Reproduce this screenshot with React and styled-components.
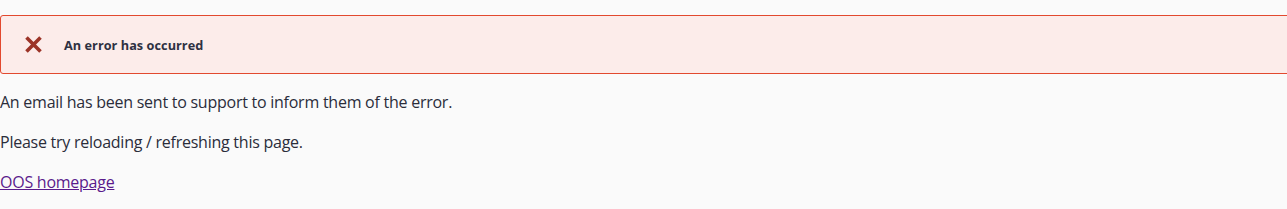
import React from 'react';
import styled, { createGlobalStyle } from 'styled-components';

const GlobalStyle = createGlobalStyle`
    html, body {
        margin: 0;
        padding: 0;
        background: #fafafa;
        overflow: hidden;
    }
`;

const StyledPage = styled.div`
    padding-top: 15px;
    font-family: "Open Sans", "Noto Sans", sans-serif;
    color: #2b2d3a;
`;

const StyledAlert = styled.div`
    display: flex;
    align-items: center;
    gap: 21px;
    box-sizing: border-box;
    width: calc(100% + 3px);
    height: 59px;
    padding: 0 0 0 23px;
    background: #fcecea;
    border: 1px solid #e2492f;
    border-radius: 3px;
`;

const StyledAlertTitle = styled.span`
    font-size: 12.7px;
    font-weight: 700;
    color: #2e3142;
    letter-spacing: 0.05px;
`;

const StyledBody = styled.div`
    padding-top: 16px;
`;

const StyledText = styled.p`
    margin: 0 0 16px 0;
    font-size: 16px;
    line-height: 24px;
    letter-spacing: -0.25px;
`;

const StyledLink = styled.a`
    font-size: 16px;
    line-height: 24px;
    letter-spacing: -0.25px;
    color: #5a1a8c;
    text-decoration: underline;
`;

function CrossIcon() {
    return (
        <svg width="19" height="19" viewBox="0 0 19 19">
            <path d="M2.5 2.5 L16.5 16.5 M16.5 2.5 L2.5 16.5" stroke="#9c3428" strokeWidth="3.6" strokeLinecap="butt" />
        </svg>
    );
}

function App() {
    return (
        <>
            <GlobalStyle />
            <StyledPage>
                <StyledAlert>
                    <CrossIcon />
                    <StyledAlertTitle>An error has occurred</StyledAlertTitle>
                </StyledAlert>
                <StyledBody>
                    <StyledText>An email has been sent to support to inform them of the error.</StyledText>
                    <StyledText>Please try reloading / refreshing this page.</StyledText>
                    <StyledLink href="#">OOS homepage</StyledLink>
                </StyledBody>
            </StyledPage>
        </>
    );
}

export default App;
